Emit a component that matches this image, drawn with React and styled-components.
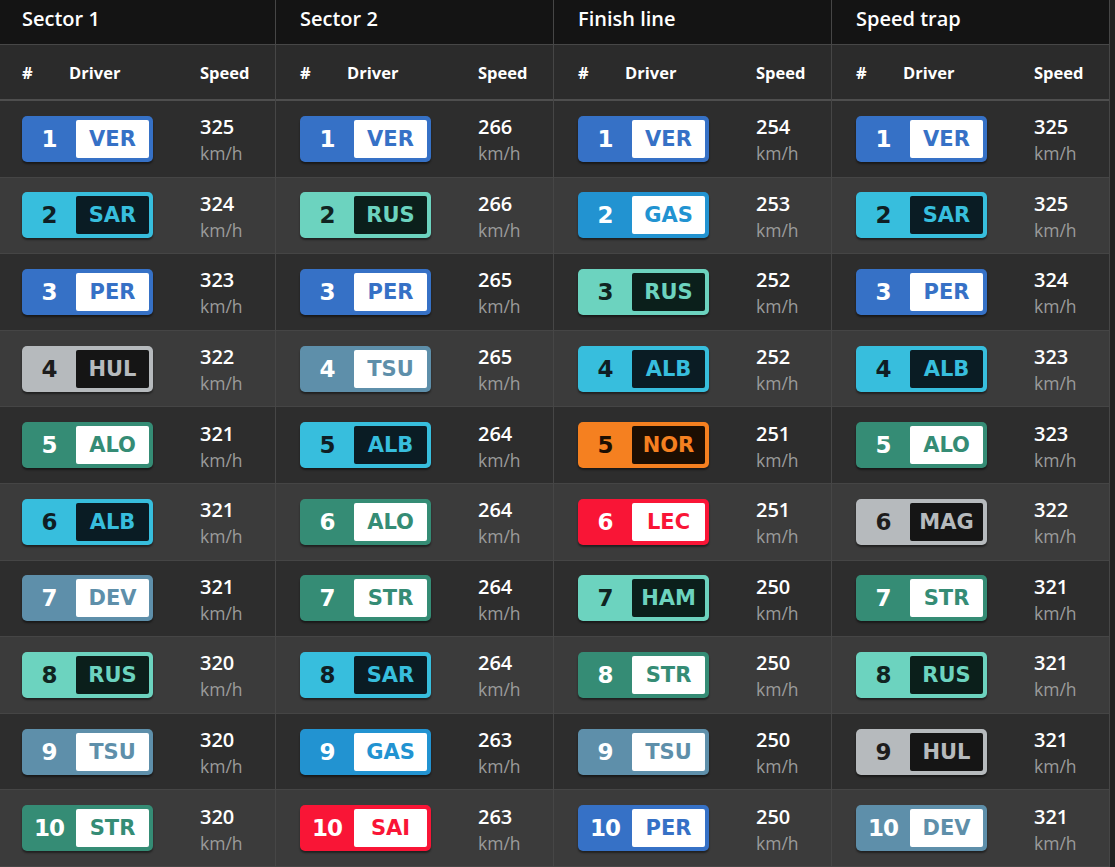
import React from "react";
import styled, { createGlobalStyle } from "styled-components";

const teams = {
  redbull: { bg: "#3671c6", box: "#ffffff", text: "#3671c6", num: "#ffffff" },
  williams: { bg: "#37bedd", box: "#0a1c24", text: "#37bedd", num: "#0f1e24" },
  haas: { bg: "#b6babd", box: "#151515", text: "#b6babd", num: "#1d1d1d" },
  aston: { bg: "#358c75", box: "#ffffff", text: "#358c75", num: "#ffffff" },
  alphatauri: { bg: "#5e8faa", box: "#ffffff", text: "#5e8faa", num: "#ffffff" },
  mercedes: { bg: "#6cd3bf", box: "#0b1f1b", text: "#6cd3bf", num: "#102421" },
  alpine: { bg: "#2293d1", box: "#ffffff", text: "#2293d1", num: "#ffffff" },
  mclaren: { bg: "#f58020", box: "#1c0e02", text: "#f58020", num: "#1c0e02" },
  ferrari: { bg: "#f91536", box: "#ffffff", text: "#f91536", num: "#ffffff" },
};

const driverTeam = {
  VER: "redbull", PER: "redbull",
  SAR: "williams", ALB: "williams",
  HUL: "haas", MAG: "haas",
  ALO: "aston", STR: "aston",
  DEV: "alphatauri", TSU: "alphatauri",
  RUS: "mercedes", HAM: "mercedes",
  GAS: "alpine", NOR: "mclaren",
  LEC: "ferrari", SAI: "ferrari",
};

const sections = [
  {
    title: "Sector 1",
    rows: [["VER", 325], ["SAR", 324], ["PER", 323], ["HUL", 322], ["ALO", 321], ["ALB", 321], ["DEV", 321], ["RUS", 320], ["TSU", 320], ["STR", 320]],
  },
  {
    title: "Sector 2",
    rows: [["VER", 266], ["RUS", 266], ["PER", 265], ["TSU", 265], ["ALB", 264], ["ALO", 264], ["STR", 264], ["SAR", 264], ["GAS", 263], ["SAI", 263]],
  },
  {
    title: "Finish line",
    rows: [["VER", 254], ["GAS", 253], ["RUS", 252], ["ALB", 252], ["NOR", 251], ["LEC", 251], ["HAM", 250], ["STR", 250], ["TSU", 250], ["PER", 250]],
  },
  {
    title: "Speed trap",
    rows: [["VER", 325], ["SAR", 325], ["PER", 324], ["ALB", 323], ["ALO", 323], ["MAG", 322], ["STR", 321], ["RUS", 321], ["HUL", 321], ["DEV", 321]],
  },
];

const GlobalStyle = createGlobalStyle`
  body {
    margin: 0;
    background: #222222;
    font-family: "Open Sans", "Noto Sans", sans-serif;
    color: #ffffff;
  }
`;

const Board = styled.div`
  display: grid;
  grid-template-columns: 276px 278px 278px 278px;
  width: 1110px;
`;

const Column = styled.div`
  display: flex;
  flex-direction: column;
  border-right: 1px solid #464646;
`;

const Title = styled.div`
  height: 45px;
  box-sizing: border-box;
  padding: 5px 0 0 ${(p) => (p.$first ? 22 : 24)}px;
  background: #141414;
  border-bottom: 1px solid #474747;
  font-size: 20px;
  font-weight: 600;
  line-height: 28px;
`;

const HeadRow = styled.div`
  display: grid;
  grid-template-columns: 47px 131px 1fr;
  align-items: center;
  height: 56px;
  box-sizing: border-box;
  padding-left: ${(p) => (p.$first ? 22 : 24)}px;
  background: #2b2b2b;
  border-bottom: 2px solid #4e4e4e;
  font-size: 16.5px;
  font-weight: 700;
`;

const Row = styled.div`
  display: grid;
  grid-template-columns: 178px 1fr;
  align-items: center;
  height: 76.6px;
  box-sizing: border-box;
  padding-left: ${(p) => (p.$first ? 22 : 24)}px;
  background: ${(p) => (p.$alt ? "#3b3b3b" : "#2d2d2d")};
  border-bottom: 1px solid #454545;
`;

const Badge = styled.div`
  display: flex;
  align-items: center;
  width: 131px;
  height: 46px;
  box-sizing: border-box;
  padding: 4px 4px 4px 0;
  border-radius: 5px;
  background: ${(p) => p.$team.bg};
  box-shadow: 0 2px 2px rgba(0, 0, 0, 0.45);
  font-family: "DejaVu Sans", "Liberation Sans", sans-serif;
  font-weight: 700;
`;

const Pos = styled.span`
  width: 54px;
  text-align: center;
  font-size: 23px;
  color: ${(p) => p.$team.num};
  letter-spacing: -1px;
`;

const Code = styled.span`
  flex: 1;
  height: 38px;
  display: flex;
  align-items: center;
  justify-content: center;
  border-radius: 2px;
  background: ${(p) => p.$team.box};
  color: ${(p) => p.$team.text};
  font-size: 21px;
`;

const Speed = styled.div`
  display: flex;
  flex-direction: column;
  padding-top: 3px;
`;

const Value = styled.span`
  font-size: 20px;
  font-weight: 600;
  line-height: 26px;
`;

const Unit = styled.span`
  font-size: 17.5px;
  color: #9b9b9b;
  line-height: 26px;
`;

function DriverBadge({ pos, code }) {
  const team = teams[driverTeam[code]];
  return (
    <Badge $team={team}>
      <Pos $team={team}>{pos}</Pos>
      <Code $team={team}>{code}</Code>
    </Badge>
  );
}

export default function App() {
  return (
    <>
      <GlobalStyle />
      <Board>
        {sections.map((s, i) => (
          <Column key={s.title}>
            <Title $first={i === 0}>{s.title}</Title>
            <HeadRow $first={i === 0}>
              <span>#</span>
              <span>Driver</span>
              <span>Speed</span>
            </HeadRow>
            {s.rows.map(([code, speed], r) => (
              <Row key={r} $first={i === 0} $alt={r % 2 === 1}>
                <DriverBadge pos={r + 1} code={code} />
                <Speed>
                  <Value>{speed}</Value>
                  <Unit>km/h</Unit>
                </Speed>
              </Row>
            ))}
          </Column>
        ))}
      </Board>
    </>
  );
}
